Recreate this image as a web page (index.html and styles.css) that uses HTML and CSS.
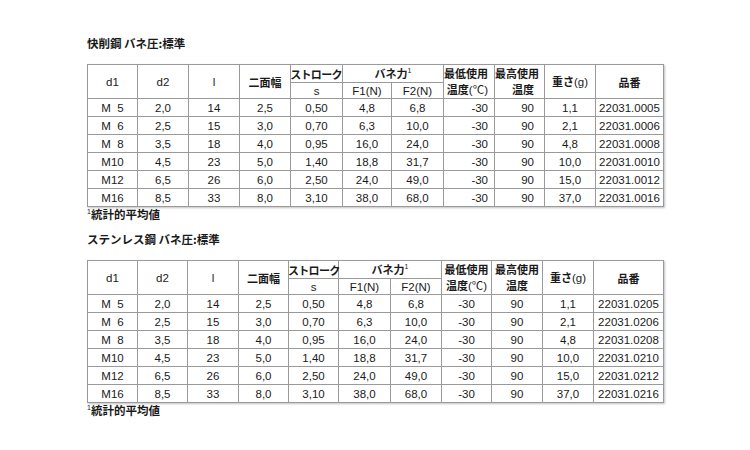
FILE: index.html
```html
<!DOCTYPE html>
<html lang="ja">
<head>
<meta charset="utf-8">
<title>バネ圧</title>
<link rel="stylesheet" href="styles.css">
</head>
<body>
<div class="page">
  <h2 class="title">快削鋼 バネ圧:標準</h2>
  <table class="spec spec-a">
    <colgroup>
      <col><col><col><col><col><col><col><col><col><col><col>
    </colgroup>
    <thead>
      <tr class="hr1">
        <th rowspan="2">d1</th>
        <th rowspan="2">d2</th>
        <th rowspan="2">l</th>
        <th rowspan="2" class="jp">二面幅</th>
        <th class="jp tight">ストローク</th>
        <th colspan="2"><span class="jp">バネ力</span><sup>1</sup></th>
        <th rowspan="2" class="two low"><span class="jp">最低使用</span><br><span class="jp">温度</span>(℃)</th>
        <th rowspan="2" class="two high"><span class="jp">最高使用</span><br><span class="jp">温度</span></th>
        <th rowspan="2"><span class="jp">重さ</span>(g)</th>
        <th rowspan="2" class="jp">品番</th>
      </tr>
      <tr class="hr2">
        <th>s</th>
        <th>F1(N)</th>
        <th>F2(N)</th>
      </tr>
    </thead>
    <tbody>
      <tr><td>M&nbsp;&nbsp;5</td><td>2,0</td><td>14</td><td>2,5</td><td>0,50</td><td>4,8</td><td>6,8</td><td class="low">-30</td><td class="high">90</td><td>1,1</td><td>22031.0005</td></tr>
      <tr><td>M&nbsp;&nbsp;6</td><td>2,5</td><td>15</td><td>3,0</td><td>0,70</td><td>6,3</td><td>10,0</td><td class="low">-30</td><td class="high">90</td><td>2,1</td><td>22031.0006</td></tr>
      <tr><td>M&nbsp;&nbsp;8</td><td>3,5</td><td>18</td><td>4,0</td><td>0,95</td><td>16,0</td><td>24,0</td><td class="low">-30</td><td class="high">90</td><td>4,8</td><td>22031.0008</td></tr>
      <tr><td>M10</td><td>4,5</td><td>23</td><td>5,0</td><td>1,40</td><td>18,8</td><td>31,7</td><td class="low">-30</td><td class="high">90</td><td>10,0</td><td>22031.0010</td></tr>
      <tr><td>M12</td><td>6,5</td><td>26</td><td>6,0</td><td>2,50</td><td>24,0</td><td>49,0</td><td class="low">-30</td><td class="high">90</td><td>15,0</td><td>22031.0012</td></tr>
      <tr><td>M16</td><td>8,5</td><td>33</td><td>8,0</td><td>3,10</td><td>38,0</td><td>68,0</td><td class="low">-30</td><td class="high">90</td><td>37,0</td><td>22031.0016</td></tr>
    </tbody>
  </table>
  <p class="note"><sup>1</sup>統計的平均値</p>

  <h2 class="title second">ステンレス鋼 バネ圧:標準</h2>
  <table class="spec spec-b">
    <colgroup>
      <col><col><col><col><col><col><col><col><col><col><col>
    </colgroup>
    <thead>
      <tr class="hr1">
        <th rowspan="2">d1</th>
        <th rowspan="2">d2</th>
        <th rowspan="2">l</th>
        <th rowspan="2" class="jp">二面幅</th>
        <th class="jp tight">ストローク</th>
        <th colspan="2"><span class="jp">バネ力</span><sup>1</sup></th>
        <th rowspan="2" class="two"><span class="jp">最低使用</span><br><span class="jp">温度</span>(℃)</th>
        <th rowspan="2" class="two"><span class="jp">最高使用</span><br><span class="jp">温度</span></th>
        <th rowspan="2"><span class="jp">重さ</span>(g)</th>
        <th rowspan="2" class="jp">品番</th>
      </tr>
      <tr class="hr2">
        <th>s</th>
        <th>F1(N)</th>
        <th>F2(N)</th>
      </tr>
    </thead>
    <tbody>
      <tr><td>M&nbsp;&nbsp;5</td><td>2,0</td><td>14</td><td>2,5</td><td>0,50</td><td>4,8</td><td>6,8</td><td>-30</td><td>90</td><td>1,1</td><td>22031.0205</td></tr>
      <tr><td>M&nbsp;&nbsp;6</td><td>2,5</td><td>15</td><td>3,0</td><td>0,70</td><td>6,3</td><td>10,0</td><td>-30</td><td>90</td><td>2,1</td><td>22031.0206</td></tr>
      <tr><td>M&nbsp;&nbsp;8</td><td>3,5</td><td>18</td><td>4,0</td><td>0,95</td><td>16,0</td><td>24,0</td><td>-30</td><td>90</td><td>4,8</td><td>22031.0208</td></tr>
      <tr><td>M10</td><td>4,5</td><td>23</td><td>5,0</td><td>1,40</td><td>18,8</td><td>31,7</td><td>-30</td><td>90</td><td>10,0</td><td>22031.0210</td></tr>
      <tr><td>M12</td><td>6,5</td><td>26</td><td>6,0</td><td>2,50</td><td>24,0</td><td>49,0</td><td>-30</td><td>90</td><td>15,0</td><td>22031.0212</td></tr>
      <tr><td>M16</td><td>8,5</td><td>33</td><td>8,0</td><td>3,10</td><td>38,0</td><td>68,0</td><td>-30</td><td>90</td><td>37,0</td><td>22031.0216</td></tr>
    </tbody>
  </table>
  <p class="note"><sup>1</sup>統計的平均値</p>
</div>
</body>
</html>
```

FILE: styles.css
```css
html, body {
  margin: 0;
  padding: 0;
  background: #ffffff;
}

body {
  font-family: "Liberation Sans", "Noto Sans CJK JP", sans-serif;
  color: #1a1a1a;
}

.page {
  padding: 36px 0 0 87px;
}

.title {
  margin: 0;
  font-family: "Noto Sans CJK JP", sans-serif;
  font-size: 11.5px;
  font-weight: 700;
  line-height: 14px;
  height: 14px;
}

.title.second {
  margin-top: 11px;
}

.spec {
  margin-top: 14px;
  border-collapse: collapse;
  table-layout: fixed;
  width: 576px;
  border: 1.5px solid #3a3a3a;
  box-shadow: 1px 1px 2px rgba(0, 0, 0, 0.25);
  font-size: 11.5px;
}

.spec th,
.spec td {
  border: 1px solid #9a9a9a;
  padding: 0;
  text-align: center;
  vertical-align: middle;
  white-space: nowrap;
  overflow: visible;
}

.spec th {
  font-weight: 400;
  line-height: 14px;
}

.spec .hr1 th {
  height: 17px;
}

.spec .hr2 th {
  height: 15px;
}

.spec td {
  height: 17px;
  line-height: 14px;
}

.spec .jp {
  font-family: "Noto Sans CJK JP", sans-serif;
  font-weight: 700;
  font-size: 11px;
}

.spec .tight {
  letter-spacing: -0.7px;
  text-indent: -1px;
}

.spec sup {
  font-size: 7px;
  line-height: 0;
  vertical-align: 5px;
}

.spec .two {
  line-height: 15px;
}

.spec-a .low {
  text-align: right;
  padding-right: 6px;
}

.spec-a .high {
  text-align: right;
  padding-right: 10px;
}

.spec-a col:nth-child(1) { width: 50px; }
.spec-a col:nth-child(2) { width: 51px; }
.spec-a col:nth-child(3) { width: 51px; }
.spec-a col:nth-child(4) { width: 51px; }
.spec-a col:nth-child(5) { width: 52px; }
.spec-a col:nth-child(6) { width: 49px; }
.spec-a col:nth-child(7) { width: 52px; }
.spec-a col:nth-child(8) { width: 51px; }
.spec-a col:nth-child(9) { width: 50px; }
.spec-a col:nth-child(10) { width: 51px; }
.spec-a col:nth-child(11) { width: 68px; }

.spec-b col:nth-child(1) { width: 50px; }
.spec-b col:nth-child(2) { width: 50px; }
.spec-b col:nth-child(3) { width: 51px; }
.spec-b col:nth-child(4) { width: 50px; }
.spec-b col:nth-child(5) { width: 50px; }
.spec-b col:nth-child(6) { width: 52px; }
.spec-b col:nth-child(7) { width: 51px; }
.spec-b col:nth-child(8) { width: 50px; }
.spec-b col:nth-child(9) { width: 51px; }
.spec-b col:nth-child(10) { width: 51px; }
.spec-b col:nth-child(11) { width: 70px; }

.note {
  margin: 0;
  font-family: "Noto Sans CJK JP", sans-serif;
  font-size: 11.5px;
  font-weight: 700;
  line-height: 14px;
  height: 14px;
}

.note sup {
  font-family: "Liberation Sans", sans-serif;
  font-size: 7px;
  font-weight: 400;
  line-height: 0;
  vertical-align: 5px;
}
```
